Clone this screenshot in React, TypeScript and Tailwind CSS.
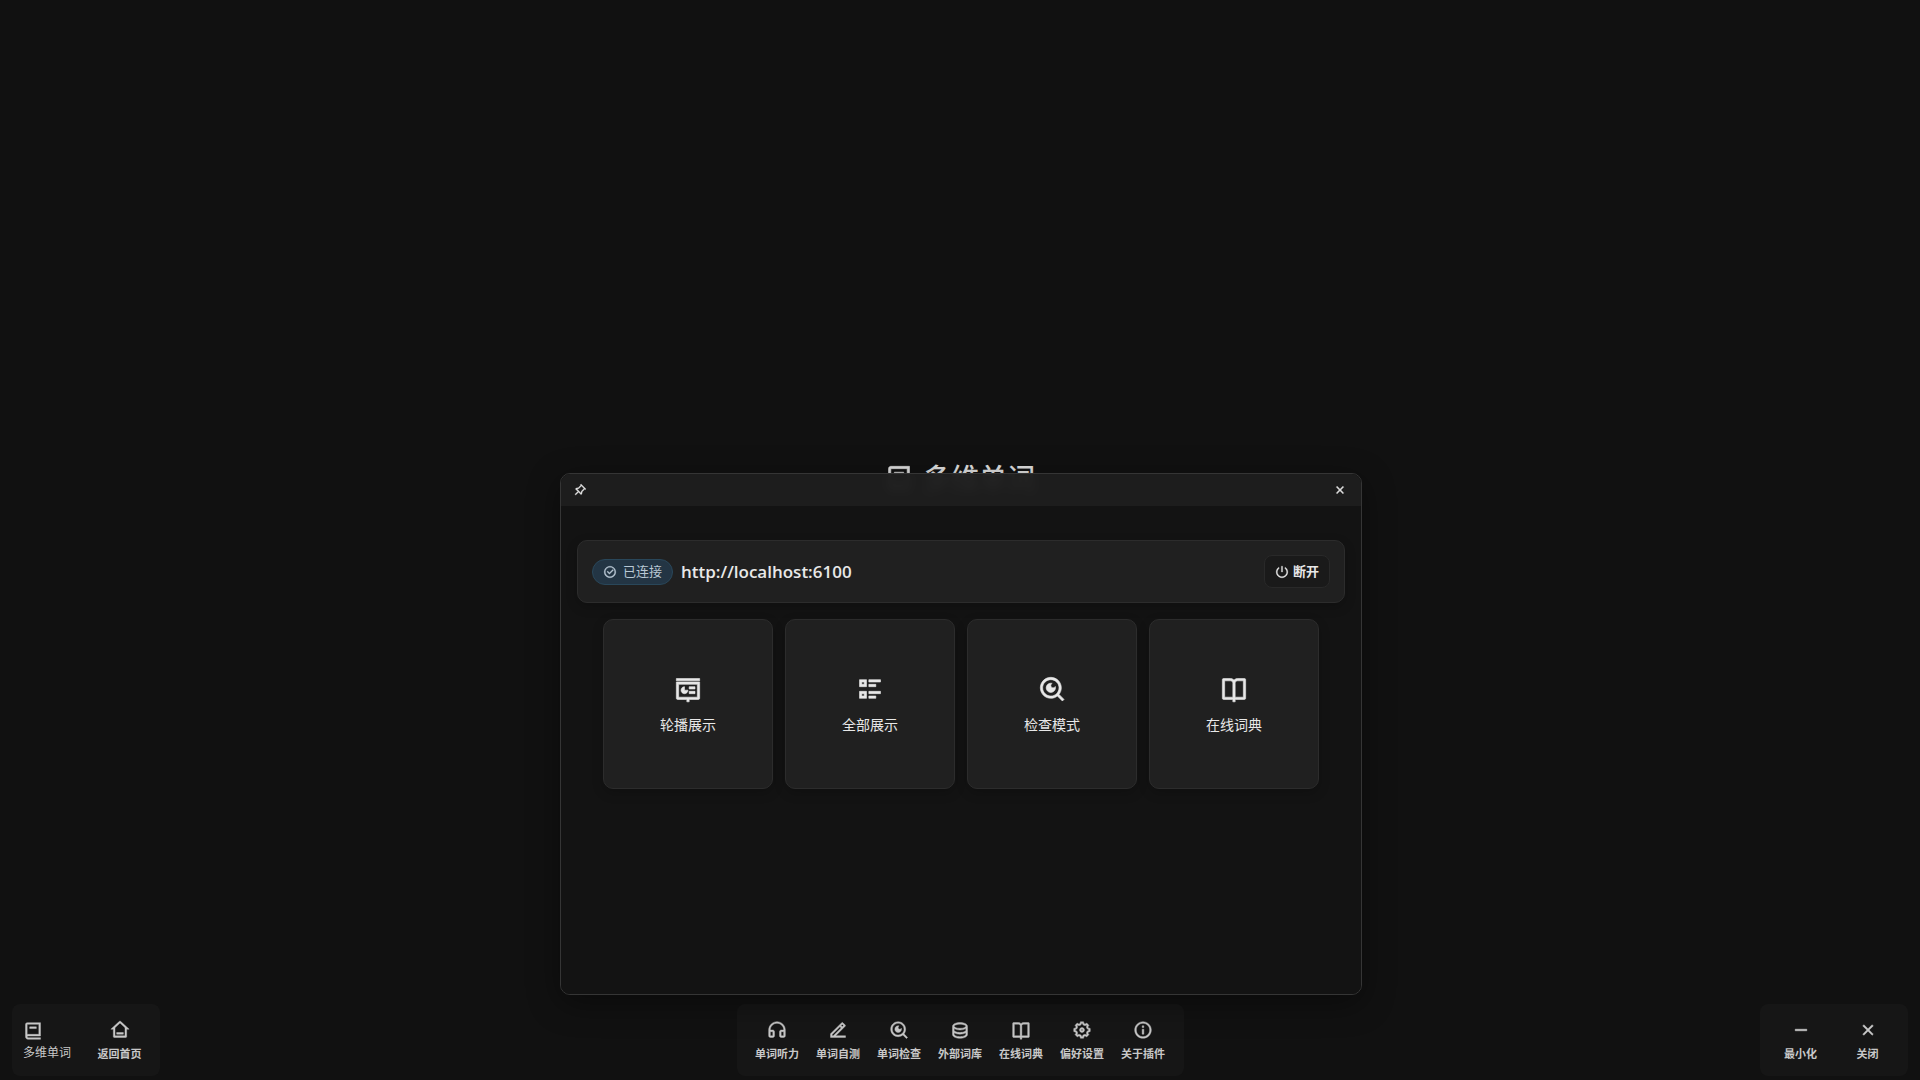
import type { ReactNode } from 'react';
import type { IconType } from 'react-icons';
import {
  RiBook2Line,
  RiBookOpenLine,
  RiCheckboxCircleLine,
  RiCloseLine,
  RiDatabase2Line,
  RiEdit2Line,
  RiHeadphoneLine,
  RiHome3Line,
  RiInformationLine,
  RiListCheck2,
  RiPushpinLine,
  RiSearchEyeLine,
  RiSettings5Line,
  RiShutDownLine,
  RiSlideshowLine,
  RiSubtractLine,
} from 'react-icons/ri';

type Entry = { label: string; icon: IconType };

const TOOLS: Entry[] = [
  { label: '单词听力', icon: RiHeadphoneLine },
  { label: '单词自测', icon: RiEdit2Line },
  { label: '单词检查', icon: RiSearchEyeLine },
  { label: '外部词库', icon: RiDatabase2Line },
  { label: '在线词典', icon: RiBookOpenLine },
  { label: '偏好设置', icon: RiSettings5Line },
  { label: '关于插件', icon: RiInformationLine },
];

const MODES: Entry[] = [
  { label: '轮播展示', icon: RiSlideshowLine },
  { label: '全部展示', icon: RiListCheck2 },
  { label: '检查模式', icon: RiSearchEyeLine },
  { label: '在线词典', icon: RiBookOpenLine },
];

function Dock({ children }: { children: ReactNode }) {
  return (
    <div className="flex h-[72px] min-w-[148px] items-center justify-between rounded-lg bg-[#161616] px-2.5">
      {children}
    </div>
  );
}

function DockButton({ label, icon: Icon }: Entry) {
  return (
    <button type="button" className="flex w-[61px] flex-col items-center gap-1.5 pt-0.5 text-[#c8c8c8]">
      <Icon size={20} className="[stroke-width:0.5px]" />
      <span className="text-[11px] leading-4 font-bold">{label}</span>
    </button>
  );
}

function ModeCard({ label, icon: Icon }: Entry) {
  return (
    <button
      type="button"
      className="flex size-[170px] flex-col items-center justify-center gap-3.5 rounded-[10px] border border-[#2c2c2c] bg-[#202020] text-[#e8e8e8] shadow-[0_4px_12px_rgba(0,0,0,0.2)]"
    >
      <Icon size={28} className="[stroke-width:0.5px]" />
      <span className="text-sm leading-4">{label}</span>
    </button>
  );
}

function AppWindow() {
  return (
    <section className="flex h-[522px] w-[802px] flex-col overflow-hidden rounded-[10px] border border-[#353535] shadow-[0_8px_32px_rgba(0,0,0,0.4)]">
      <header className="flex h-8 shrink-0 items-center justify-between bg-[#1e1e1e]/97 pr-3.5 pl-3 text-[#e0e0e0] backdrop-blur-xs">
        <button type="button" aria-label="置顶">
          <RiPushpinLine size={14} className="[stroke-width:0.5px]" />
        </button>
        <button type="button" aria-label="关闭窗口">
          <RiCloseLine size={14} className="[stroke-width:0.8px]" />
        </button>
      </header>
      <div className="flex flex-1 flex-col items-center gap-4 bg-[#131313] px-4 pt-[34px]">
        <div className="flex h-[63px] w-full items-center rounded-[10px] border border-[#2c2c2c] bg-[#202020] px-3.5 shadow-[0_4px_12px_rgba(0,0,0,0.2)]">
          <span className="flex h-[26px] items-center gap-1.5 rounded-full border border-[#29475a] bg-[#233544] px-2.5 text-[13px] text-[#b9c8d4]">
            <RiCheckboxCircleLine size={14} className="[stroke-width:0.5px]" />
            已连接
          </span>
          <strong className="ml-2 text-[17px] font-semibold text-[#e8e8e8]">http://localhost:6100</strong>
          <button
            type="button"
            className="ml-auto flex h-[33px] items-center gap-1 rounded-lg border border-[#292929] bg-[#1a1a1a] px-2.5 text-[13px] font-bold text-[#e8e8e8]"
          >
            <RiShutDownLine size={14} className="[stroke-width:0.5px]" />
            断开
          </button>
        </div>
        <div className="flex gap-3">
          {MODES.map((mode) => (
            <ModeCard key={mode.label} {...mode} />
          ))}
        </div>
      </div>
    </section>
  );
}

export default function App() {
  return (
    <div className="relative flex h-screen flex-col overflow-hidden bg-[#111111] font-['Open_Sans','Noto_Sans_CJK_SC',sans-serif]">
      <main className="flex flex-1 items-center justify-center pb-12">
        <h1 className="flex items-center gap-2.5 text-[28px] leading-10 font-medium text-[#e0e0e0]">
          <RiBook2Line size={28} className="[stroke-width:0.5px]" />
          多维单词
        </h1>
      </main>

      <footer className="grid grid-cols-[1fr_auto_1fr] px-3 pb-1">
        <div className="flex">
          <Dock>
            <div className="flex flex-col gap-1 pt-0.5 pl-px text-[#c8c8c8]">
              <RiBook2Line size={20} className="[stroke-width:0.5px]" />
              <span className="text-xs leading-4">多维单词</span>
            </div>
            <DockButton label="返回首页" icon={RiHome3Line} />
          </Dock>
        </div>
        <Dock>
          {TOOLS.map((tool) => (
            <DockButton key={tool.label} {...tool} />
          ))}
        </Dock>
        <div className="flex justify-end">
          <Dock>
            <DockButton label="最小化" icon={RiSubtractLine} />
            <DockButton label="关闭" icon={RiCloseLine} />
          </Dock>
        </div>
      </footer>

      <div className="absolute top-[473px] left-[560px]">
        <AppWindow />
      </div>
    </div>
  );
}
